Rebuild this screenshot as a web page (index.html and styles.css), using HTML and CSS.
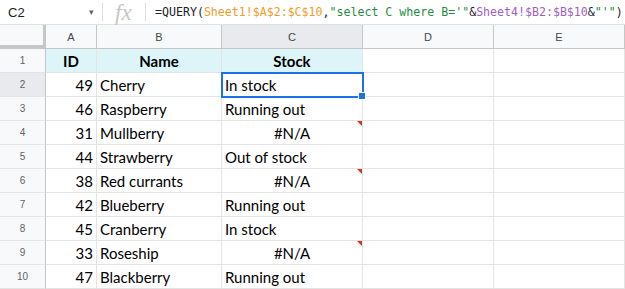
FILE: index.html
```html
<html>
<head>
    <meta name="viewport" content="width=device-width">
    <title>Sheet</title>
    <link rel="stylesheet" href="styles.css">
</head>
<body>

<div class="formula-bar">
    <div class="name-box">
        <span class="cell-ref">C2</span>
        <span class="drop">&#9662;</span>
    </div>
    <div class="fx-box"><span class="fx">fx</span></div>
    <div class="formula"><span class="plain">=QUERY(</span><span class="ref1">Sheet1!$A$2:$C$10</span><span class="plain">,</span><span class="str">"select C where B='"</span><span class="plain">&amp;</span><span class="ref2">Sheet4!$B2:$B$10</span><span class="plain">&amp;</span><span class="str">"'"</span><span class="plain">)</span></div>
</div>

<div class="grid">
    <div class="corner"></div>
    <div class="col-head">A</div>
    <div class="col-head">B</div>
    <div class="col-head selected">C</div>
    <div class="col-head">D</div>
    <div class="col-head">E</div>

    <div class="row-head">1</div>
    <div class="cell title">ID</div>
    <div class="cell title">Name</div>
    <div class="cell title">Stock</div>
    <div class="cell"></div>
    <div class="cell"></div>

    <div class="row-head selected">2</div>
    <div class="cell num">49</div>
    <div class="cell">Cherry</div>
    <div class="cell active">In stock<span class="handle"></span></div>
    <div class="cell"></div>
    <div class="cell"></div>

    <div class="row-head">3</div>
    <div class="cell num">46</div>
    <div class="cell">Raspberry</div>
    <div class="cell">Running out</div>
    <div class="cell"></div>
    <div class="cell"></div>

    <div class="row-head">4</div>
    <div class="cell num">31</div>
    <div class="cell">Mullberry</div>
    <div class="cell error">#N/A</div>
    <div class="cell"></div>
    <div class="cell"></div>

    <div class="row-head">5</div>
    <div class="cell num">44</div>
    <div class="cell">Strawberry</div>
    <div class="cell">Out of stock</div>
    <div class="cell"></div>
    <div class="cell"></div>

    <div class="row-head">6</div>
    <div class="cell num">38</div>
    <div class="cell">Red currants</div>
    <div class="cell error">#N/A</div>
    <div class="cell"></div>
    <div class="cell"></div>

    <div class="row-head">7</div>
    <div class="cell num">42</div>
    <div class="cell">Blueberry</div>
    <div class="cell">Running out</div>
    <div class="cell"></div>
    <div class="cell"></div>

    <div class="row-head">8</div>
    <div class="cell num">45</div>
    <div class="cell">Cranberry</div>
    <div class="cell">In stock</div>
    <div class="cell"></div>
    <div class="cell"></div>

    <div class="row-head">9</div>
    <div class="cell num">33</div>
    <div class="cell">Roseship</div>
    <div class="cell error">#N/A</div>
    <div class="cell"></div>
    <div class="cell"></div>

    <div class="row-head">10</div>
    <div class="cell num">47</div>
    <div class="cell">Blackberry</div>
    <div class="cell">Running out</div>
    <div class="cell"></div>
    <div class="cell"></div>
</div>

</body>
</html>
```

FILE: styles.css
```css
body {
    margin: 0;
    padding: 0;
    overflow: hidden;
    background: #fff;
    font-family: "Liberation Sans", Arial, sans-serif;
}

.formula-bar {
    display: flex;
    align-items: center;
    height: 24px;
    border-bottom: 1px solid #e0e0e0;
}

.name-box {
    display: flex;
    align-items: center;
    justify-content: space-between;
    flex: none;
    width: 103px;
    padding-left: 8px;
    padding-right: 8px;
    box-sizing: border-box;
    height: 18px;
    border-right: 1px solid #e0e0e0;
}

.cell-ref {
    font-size: 13px;
    color: #202124;
}

.drop {
    font-size: 9px;
    color: #5f6368;
}

.fx-box {
    flex: none;
    width: 43px;
    height: 18px;
    display: flex;
    align-items: center;
    padding-left: 12px;
    box-sizing: border-box;
    border-right: 1px solid #e0e0e0;
}

.fx {
    font-family: "Liberation Serif", serif;
    font-style: italic;
    font-size: 23px;
    color: #c4c7c5;
    line-height: 1;
}

.formula {
    padding-left: 9px;
    font-family: "DejaVu Sans Mono", monospace;
    font-size: 11.6px;
    white-space: nowrap;
    color: #202124;
}

.ref1 { color: #f29b2a; }
.str { color: #1e8e3e; }
.ref2 { color: #9e5fc4; }

.grid {
    display: grid;
    grid-template-columns: 46px 51px 125px 141px 131px 131px;
    grid-auto-rows: 24px;
}

.corner {
    background: #f8f9fa;
    border-right: 4px solid #c4c7c5;
    border-bottom: 4px solid #c4c7c5;
    margin-right: -1px;
}

.col-head {
    display: flex;
    align-items: center;
    justify-content: center;
    background: #f8f9fa;
    border-right: 1px solid #c4c7c5;
    border-bottom: 1px solid #c4c7c5;
    font-size: 11px;
    color: #444746;
}

.row-head {
    display: flex;
    align-items: center;
    justify-content: center;
    background: #f8f9fa;
    border-right: 1px solid #c4c7c5;
    border-bottom: 1px solid #e2e3e3;
    font-size: 10px;
    color: #5f6368;
}

.col-head.selected,
.row-head.selected {
    background: #e8eaed;
}

.cell {
    position: relative;
    display: flex;
    align-items: flex-end;
    padding: 0 3px 2px;
    border-right: 1px solid #e2e3e3;
    border-bottom: 1px solid #e2e3e3;
    font-family: "Lato", sans-serif;
    font-size: 15px;
    color: #000;
    white-space: nowrap;
    overflow: visible;
}

.title {
    background: #ddf5f8;
    font-weight: bold;
    justify-content: center;
}

.num {
    justify-content: flex-end;
}

.error {
    justify-content: center;
}

.error::after {
    content: "";
    position: absolute;
    top: 0;
    right: 0;
    border-top: 5px solid #d93025;
    border-left: 5px solid transparent;
}

.active {
    outline: 2px solid #1a73e8;
    outline-offset: -1px;
    z-index: 1;
}

.handle {
    position: absolute;
    right: -4px;
    bottom: -4px;
    width: 6px;
    height: 6px;
    background: #1a73e8;
    border: 1px solid #fff;
}
```
